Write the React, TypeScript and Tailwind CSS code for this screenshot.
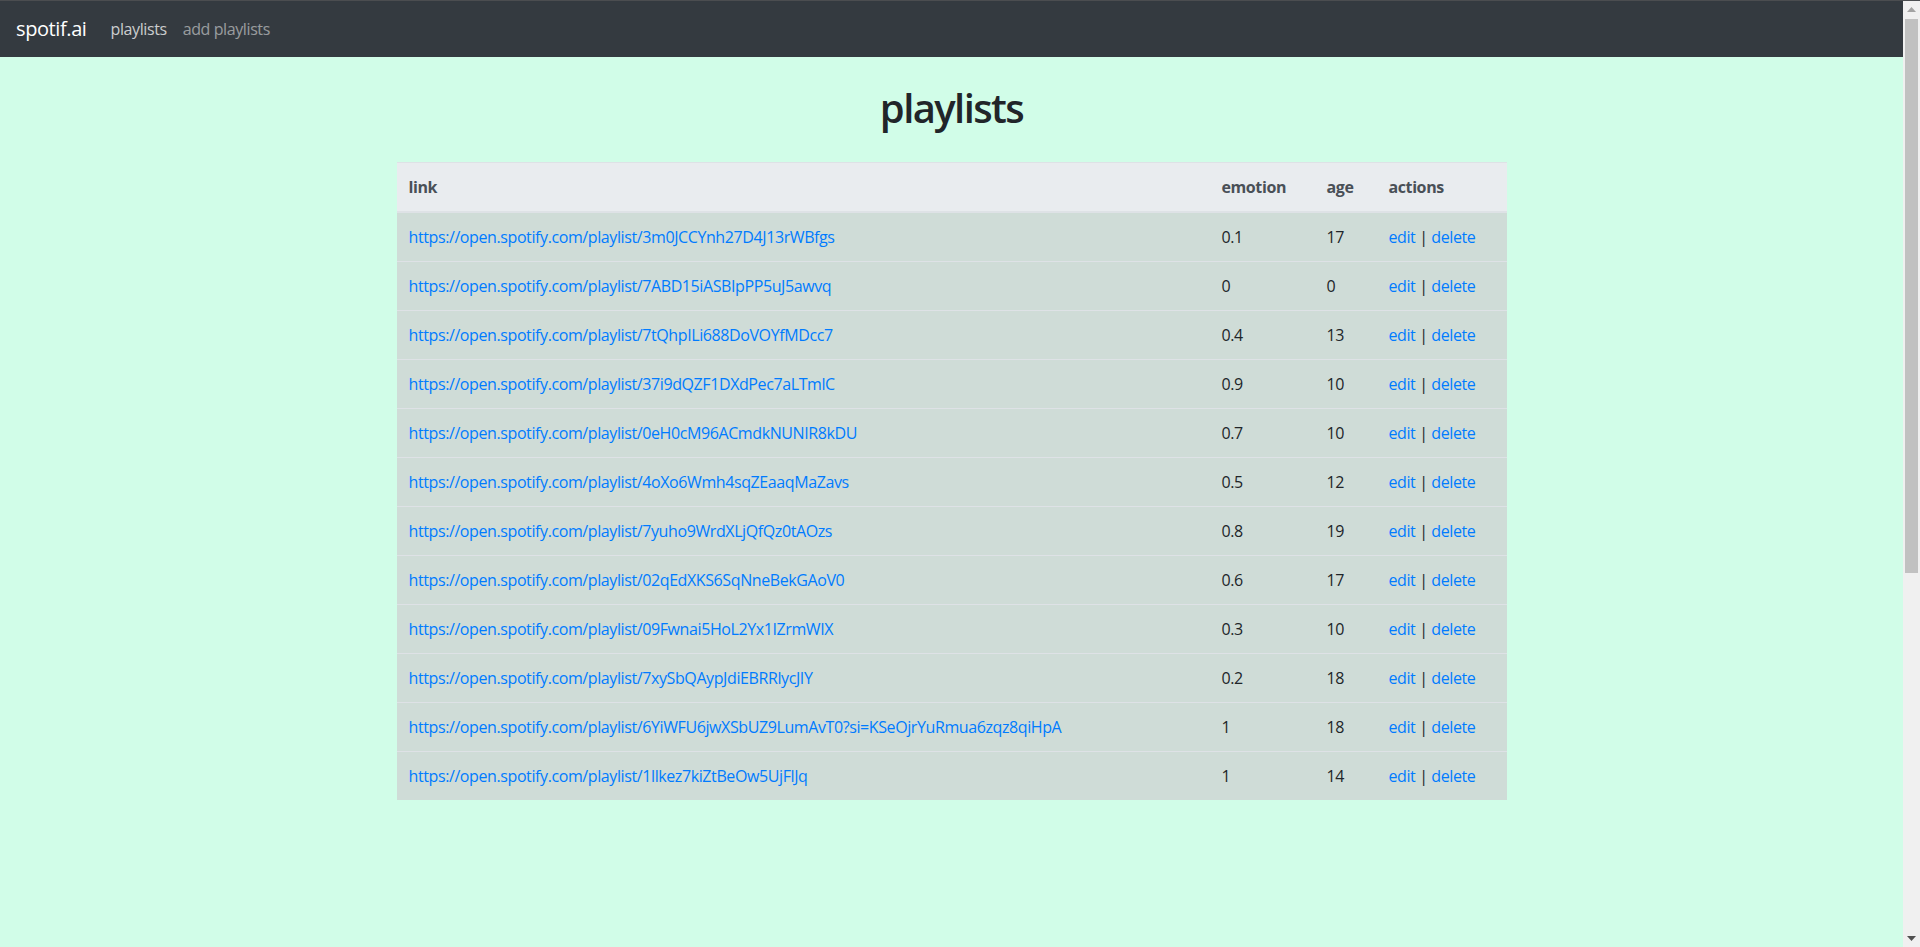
type Playlist = {
  id: number;
  link: string;
  emotion: string;
  age: number;
};

const playlists: Playlist[] = [
  { id: 1, link: "https://open.spotify.com/playlist/3m0JCCYnh27D4J13rWBfgs", emotion: "0.1", age: 17 },
  { id: 2, link: "https://open.spotify.com/playlist/7ABD15iASBIpPP5uJ5awvq", emotion: "0", age: 0 },
  { id: 3, link: "https://open.spotify.com/playlist/7tQhpILi688DoVOYfMDcc7", emotion: "0.4", age: 13 },
  { id: 4, link: "https://open.spotify.com/playlist/37i9dQZF1DXdPec7aLTmlC", emotion: "0.9", age: 10 },
  { id: 5, link: "https://open.spotify.com/playlist/0eH0cM96ACmdkNUNIR8kDU", emotion: "0.7", age: 10 },
  { id: 6, link: "https://open.spotify.com/playlist/4oXo6Wmh4sqZEaaqMaZavs", emotion: "0.5", age: 12 },
  { id: 7, link: "https://open.spotify.com/playlist/7yuho9WrdXLjQfQz0tAOzs", emotion: "0.8", age: 19 },
  { id: 8, link: "https://open.spotify.com/playlist/02qEdXKS6SqNneBekGAoV0", emotion: "0.6", age: 17 },
  { id: 9, link: "https://open.spotify.com/playlist/09Fwnai5HoL2Yx1IZrmWIX", emotion: "0.3", age: 10 },
  { id: 10, link: "https://open.spotify.com/playlist/7xySbQAypJdiEBRRlycJIY", emotion: "0.2", age: 18 },
  { id: 11, link: "https://open.spotify.com/playlist/6YiWFU6jwXSbUZ9LumAvT0?si=KSeOjrYuRmua6zqz8qiHpA", emotion: "1", age: 18 },
  { id: 12, link: "https://open.spotify.com/playlist/1llkez7kiZtBeOw5UjFlJq", emotion: "1", age: 14 },
];

function Navbar() {
  return (
    <nav className="flex items-center h-14 px-4 bg-[#343a40]">
      <a href="#" className="mr-4 text-[20px] leading-[30px] text-white">spotif.ai</a>
      <a href="#" className="px-2 text-white/75">playlists</a>
      <a href="#" className="px-2 text-white/50">add playlists</a>
    </nav>
  );
}

// browser scrollbar as seen in the screenshot
function Scrollbar() {
  return (
    <div className="w-[17px] h-[946px] shrink-0 flex flex-col items-center bg-[#f0f0f0]">
      <div className="h-[17px] flex items-center">
        <svg width="9" height="5" viewBox="0 0 9 5"><path d="M4.5 0 9 5H0z" fill="#a3a3a3" /></svg>
      </div>
      <div className="w-[13px] h-[554px] mt-px bg-[#c1c1c1]" />
      <div className="flex-1" />
      <div className="h-[17px] flex items-center">
        <svg width="9" height="5" viewBox="0 0 9 5"><path d="M0 0h9L4.5 5z" fill="#505050" /></svg>
      </div>
    </div>
  );
}

export default function App() {
  return (
    <div className="bg-[#d1fde8] text-[#212529] text-base leading-6 tracking-[-0.025em]" style={{ fontFamily: "'Open Sans', 'Noto Sans', sans-serif" }}>
      <div className="h-px bg-[#4b4d50]" />
      <div className="flex items-start">
        <div className="flex-1 min-h-[1560px]">
          <Navbar />
          <div className="max-w-[1140px] mx-auto px-[15px]">
            <h1 className="mt-[27px] mb-[30px] text-center text-[40px] leading-[48px] font-semibold tracking-[-0.04em]">playlists</h1>
            <table className="w-full border-collapse">
              <thead>
                <tr className="bg-[#e9ecef] text-[#495057] text-left">
                  <th className="w-[813px] p-3 border-t border-b-2 border-[#dee2e6] font-bold">link</th>
                  <th className="w-[105px] p-3 border-t border-b-2 border-[#dee2e6] font-bold">emotion</th>
                  <th className="w-[62px] p-3 border-t border-b-2 border-[#dee2e6] font-bold">age</th>
                  <th className="w-[130px] p-3 border-t border-b-2 border-[#dee2e6] font-bold">actions</th>
                </tr>
              </thead>
              <tbody>
                {playlists.map((p, i) => (
                  <tr key={p.id} className={`bg-[#cfdcd7] ${i > 0 ? "border-t border-[#dee2e6]" : ""}`}>
                    <td className="p-3"><a href="#" className="text-[#007bff]">{p.link}</a></td>
                    <td className="p-3">{p.emotion}</td>
                    <td className="p-3">{p.age}</td>
                    <td className="p-3 whitespace-nowrap">
                      <a href="#" className="text-[#007bff]">edit</a> | <a href="#" className="text-[#007bff]">delete</a>
                    </td>
                  </tr>
                ))}
              </tbody>
            </table>
          </div>
        </div>
        <Scrollbar />
      </div>
    </div>
  );
}
